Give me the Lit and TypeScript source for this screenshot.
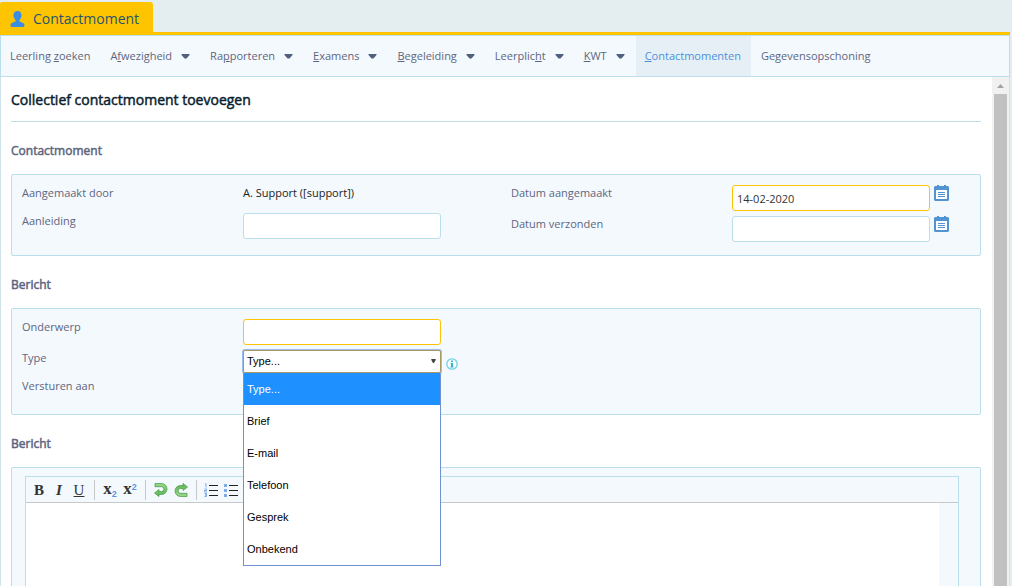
import { LitElement, html, svg, css } from "lit";
import { customElement, state } from "lit/decorators.js";

type NavItem = { pre: string; key: string; post: string; menu?: boolean; active?: boolean };

const NAV: NavItem[] = [
  { pre: "Leerling ", key: "z", post: "oeken" },
  { pre: "A", key: "f", post: "wezigheid", menu: true },
  { pre: "Ra", key: "p", post: "porteren", menu: true },
  { pre: "", key: "E", post: "xamens", menu: true },
  { pre: "", key: "B", post: "egeleiding", menu: true },
  { pre: "Leerplic", key: "h", post: "t", menu: true },
  { pre: "", key: "K", post: "WT", menu: true },
  { pre: "", key: "C", post: "ontactmomenten", active: true },
  { pre: "Gegevensopschoning", key: "", post: "" },
];

const TYPES = ["Type...", "Brief", "E-mail", "Telefoon", "Gesprek", "Onbekend"];

const calendar = html`<svg width="15" height="16" viewBox="0 0 15 16" aria-hidden="true">
  <path fill="#fff" d="M1 5h13v10H1z" />
  <path fill="#5293d1" fill-rule="evenodd" d="M3 0h2v1h5V0h2v1h2l1 1v13l-1 1H1l-1-1V2l1-1h2zM2 5v9h11V5z" />
  <path fill="#5293d1" d="M4 7h7v1H4zM4 9h7v1H4zM4 11h7v1H4z" />
</svg>`;

const arrow = svg`<path fill="url(#green)" stroke="#3f9a3c" stroke-width=".7"
  d="M4 3.500h6.500a5.500 5.500 0 0 1 0 11H8v2L3.500 13 8 9.500v2h2.500a2.400 2.400 0 0 0 0-4.800H4z" />`;

const icon = (body: unknown) => html`<svg width="20" height="20" viewBox="0 0 20 20" aria-hidden="true">
  <defs><linearGradient id="green" x1="0" y1="0" x2="0" y2="1">
    <stop offset="0" stop-color="#9ad78c" /><stop offset="1" stop-color="#5cb355" />
  </linearGradient></defs>${body}</svg>`;

const TOOLS = [
  [
    { name: "Vet", body: html`<b>B</b>` },
    { name: "Cursief", body: html`<b><i>I</i></b>` },
    { name: "Onderstrepen", body: html`<u>U</u>` },
  ],
  [
    { name: "Subscript", body: html`<b class="x">x</b><sub>2</sub>` },
    { name: "Superscript", body: html`<b class="x">x</b><sup>2</sup>` },
  ],
  [
    { name: "Ongedaan maken", body: icon(arrow) },
    { name: "Opnieuw", body: icon(svg`<g transform="rotate(180 10 10)">${arrow}</g>`) },
  ],
  [
    {
      name: "Genummerde lijst",
      body: icon(svg`<path stroke="#222" d="M7 5.500h9M7 10.500h9M7 15.500h9" />
        <path fill="none" stroke="#7fabe6" d="M3 4l1-.5v4M2.500 9h2v1.500h-2V12h2.500M2.500 13.500h2V15H3h1.500v1.500h-2" />`),
    },
    {
      name: "Lijst",
      body: icon(svg`<path stroke="#222" d="M7 5.500h9M7 10.500h9M7 15.500h9" />
        <path fill="#7fabe6" d="M2 4h3v3H2zM2 9h3v3H2zM2 14h3v3H2z" />`),
    },
  ],
];

@customElement("app-root")
export class AppRoot extends LitElement {
  static styles = css`
    :host {
      display: block;
      height: 100vh;
      overflow: hidden;
      background: #e4edf0;
      color: #5e6680;
      font: 11px/16px "Open Sans", sans-serif;
    }
    * { box-sizing: border-box; }
    button { margin: 0; padding: 0; border: 0; background: none; color: inherit; font: inherit; }
    .shell { display: flex; flex-direction: column; height: 100%; padding-top: 2px; margin-right: 2px; }
    .tabs { display: flex; border-bottom: 3px solid #ffc400; }
    .tab {
      display: flex; align-items: center; gap: 8px; height: 30px; padding: 4px 14px 0 10px;
      background: #ffc400; border-radius: 2px 3px 0 0;
      color: #1f5471; font-size: 14px; text-decoration: none;
    }
    .nav {
      display: flex; gap: 1px; height: 42px; flex: none;
      background: #f4f9fd; border: 1px solid #bbdeed;
    }
    .nav a {
      display: flex; align-items: center; gap: 9px; padding: 0 10px 0 9px;
      color: inherit; text-decoration: none;
    }
    .nav a.active { background: #e6eff5; color: #4a90e2; }
    .view { flex: 1; min-height: 0; display: flex; background: #fff; border: solid #cfe3ec; border-width: 0 1px; }
    .content { flex: 1; min-width: 0; overflow: hidden; padding: 0 11px 0 10px; }
    .scroll { width: 17px; display: flex; flex-direction: column; align-items: center; background: #f1f1f1; }
    .scroll svg { flex: none; }
    .thumb { flex: 1; width: 13px; background: #c1c1c1; }
    h1, h2 { font-weight: 400; -webkit-text-stroke: 0.5px currentColor; }
    h1 {
      margin: 0; padding: 13px 0 11px; border-bottom: 1px solid #bfdce6;
      font-size: 14px; line-height: 20px; color: #0b1f30;
    }
    h2 { margin: 21px 0 15px; font-size: 12px; line-height: 16px; }
    .panel { background: #f4f9fd; border: 1px solid #bbdeed; border-radius: 2px; }
    .form { display: grid; grid-template-columns: 1fr 1fr; column-gap: 20px; padding: 10px 0 13px 10px; }
    .col { display: flex; flex-direction: column; gap: 5px; }
    .row { display: grid; grid-template-columns: 221px 1fr; min-height: 23px; align-items: start; }
    .value { color: #222; }
    .ctl { display: flex; gap: 4px; align-items: start; }
    input, select {
      width: 198px; height: 26px; margin: 0; padding: 0 4px; outline: 0;
      border: 1px solid #bbdeed; border-radius: 3px; background: #fff; color: #333;
      font: inherit;
    }
    input.required { border-color: #ffc400; }
    .pick { position: relative; }
    select {
      display: block; height: 23px; padding: 0 3px 2px; appearance: none; border-color: #a89a62; border-radius: 2px;
      box-shadow: 0 0 0 1px #9dbcf0; color: #000; font: 11px "Liberation Sans", Arial, sans-serif;
    }
    .pick svg { position: absolute; right: 5px; top: 9px; pointer-events: none; }
    .list {
      position: absolute; z-index: 2; top: 23px; left: 0; width: 100%; margin: 0; padding: 0; list-style: none;
      background: #fff; border: 1px solid #6f93d0; border-top: 0;
      font: 11px/32px "Liberation Sans", Arial, sans-serif; color: #000;
    }
    .list li { padding-left: 3px; }
    .list li.on { background: #1e90ff; color: #fff; }
    .info { padding: 8px 0 0 1px; display: flex; }
    .editor { padding: 8px 21px 0 13px; }
    .box { border: 1px solid #bbdeed; border-bottom: 0; }
    .bar { display: flex; align-items: center; height: 26px; padding-left: 3px; border-bottom: 1px solid #c6c8ca; }
    .group { display: flex; }
    .group + .group::before { content: ""; width: 1px; height: 20px; margin: 0 5px; background: #c6c8ca; }
    .tool {
      display: flex; justify-content: center; width: 20px; height: 20px;
      font: 15px/20px "Liberation Serif", serif; color: #333;
    }
    .tool .x { font-size: 17px; line-height: 18px; }
    .tool sub, .tool sup { font: bold 9px/10px "Liberation Sans", sans-serif; color: #5f93dc; }
    .tool sub { align-self: end; line-height: 12px; }
    .tool sup { align-self: start; line-height: 14px; }
    textarea {
      display: block; width: 100%; height: 240px; margin: 0; padding: 4px; border: 0;
      border-right: 19px solid #f4f9fd; outline: 0; resize: none; background: #fff; font: inherit;
    }
  `;

  @state() private type = TYPES[0];

  render() {
    return html`<div class="shell">
      <div class="tabs">
        <a class="tab" href="#">
          <svg width="15" height="16" viewBox="0 0 15 16" aria-hidden="true">
            <path fill="#3a8de0" d="M7.500 0c2.600 0 4.200 1.900 4 4.500-.1 2-.9 3.400-2 4.500v1.500c1.800.8 4.700 1.400 5 3.200.1 1.200-.3 2.300-1.200 2.300H1.700C.8 16 .4 14.900.5 13.700c.3-1.800 3.200-2.400 5-3.200V9c-1.100-1.100-1.900-2.500-2-4.500C3.300 1.900 4.900 0 7.500 0z" />
          </svg>
          Contactmoment
        </a>
      </div>
      <nav class="nav">
        ${NAV.map((n) => html`<a href="#" class=${n.active ? "active" : ""}><span>${n.pre}<u>${n.key}</u>${n.post}</span>${n.menu
          ? html`<svg width="9" height="5" viewBox="0 0 9 5" aria-hidden="true"><path fill="#52607f" d="M.5 0h8v1L5.500 4.500h-2L.5 1z" /></svg>`
          : ""}</a>`)}
      </nav>
      <div class="view">
        <main class="content">
          <h1>Collectief contactmoment toevoegen</h1>
          <h2>Contactmoment</h2>
          <section class="panel form">
            <div class="col">
              <div class="row"><span>Aangemaakt door</span><span class="value">A. Support ([support])</span></div>
              <div class="row"><label for="reason">Aanleiding</label><input id="reason" /></div>
            </div>
            <div class="col">
              <div class="row">
                <label for="created">Datum aangemaakt</label>
                <div class="ctl"><input id="created" class="required" value="14-02-2020" /><button aria-label="Kies datum aangemaakt">${calendar}</button></div>
              </div>
              <div class="row">
                <label for="sent">Datum verzonden</label>
                <div class="ctl"><input id="sent" /><button aria-label="Kies datum verzonden">${calendar}</button></div>
              </div>
            </div>
          </section>
          <h2>Bericht</h2>
          <section class="panel form">
            <div class="col">
              <div class="row"><label for="subject">Onderwerp</label><input id="subject" class="required" /></div>
              <div class="row">
                <label for="type">Type</label>
                <div class="ctl">
                  <div class="pick">
                    <select id="type" .value=${this.type} @change=${(e: Event) => (this.type = (e.target as HTMLSelectElement).value)}>
                      ${TYPES.map((t) => html`<option>${t}</option>`)}
                    </select>
                    <svg width="5" height="4" viewBox="0 0 5 4" aria-hidden="true"><path fill="#444" d="M.3 0h4.400v1L3 4H2L.3 1z" /></svg>
                    <ul class="list" role="listbox" aria-label="Type">
                      ${TYPES.map((t) => html`<li role="option" aria-selected=${t === this.type} class=${t === this.type ? "on" : ""} @click=${() => (this.type = t)}>${t}</li>`)}
                    </ul>
                  </div>
                  <button class="info" aria-label="Informatie">
                    <svg width="12" height="12" viewBox="0 0 12 12" aria-hidden="true">
                      <circle cx="6" cy="6" r="5.200" fill="#fff" stroke="#6fd0e6" stroke-width="1.300" />
                      <path fill="#2fb4d4" d="M5 2.500h2V4H5zM4.500 5H7v3.500h.6v1H4.400v-1H5V6h-.5z" />
                    </svg>
                  </button>
                </div>
              </div>
              <div class="row"><span>Versturen aan</span></div>
            </div>
          </section>
          <h2>Bericht</h2>
          <section class="panel editor">
            <div class="box">
              <div class="bar" role="toolbar">
                ${TOOLS.map((g) => html`<div class="group">${g.map((t) => html`<button class="tool" aria-label=${t.name}>${t.body}</button>`)}</div>`)}
              </div>
              <textarea aria-label="Bericht"></textarea>
            </div>
          </section>
        </main>
        <div class="scroll" aria-hidden="true">
          <svg width="17" height="17" viewBox="0 0 17 17"><path fill="#a3a3a3" d="M5 11l3.500-4 3.500 4z" /></svg>
          <div class="thumb"></div>
        </div>
      </div>
    </div>`;
  }
}
